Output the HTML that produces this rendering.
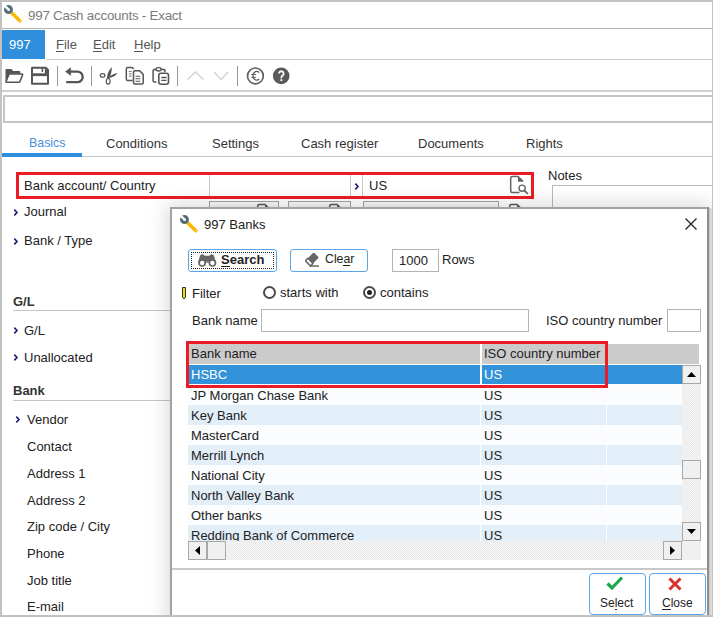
<!DOCTYPE html>
<html><head><meta charset="utf-8">
<style>
*{box-sizing:border-box;margin:0;padding:0}
html,body{width:713px;height:617px;overflow:hidden;background:#fff}
body{position:relative;font-family:"Liberation Sans",sans-serif;font-size:13px;color:#222}
.a{position:absolute}
.t{position:absolute;font-size:13px;line-height:15px;white-space:nowrap}
.hl{position:absolute;height:1px;background:#c8c8c8}
.vl{position:absolute;width:1px;background:#c8c8c8}
.chev{position:absolute;width:4px;height:7px}
u{text-decoration:none;border-bottom:1px solid currentColor;display:inline-block;line-height:12px}
</style></head><body>


<!-- title bar -->
<svg class="a" style="left:0px;top:0px" width="26" height="26" viewBox="0 0 26 26">
  <path d="M11.8 13 L19.8 20.8" stroke="#f9b800" stroke-width="3.6" stroke-linecap="round"/>
  <circle cx="19.6" cy="20.6" r="0.7" fill="#ffe9a8"/>
  <circle cx="8.5" cy="9.6" r="4.5" fill="#546e7a"/><path d="M9.6 8.9 L5.9 5.2 L4.2 6.9 L7.9 10.6 Z" fill="#fff"/><circle cx="8.75" cy="9.75" r="1.25" fill="#fff"/>
</svg>
<div class="t" style="left:28px;top:8px;color:#7b7b7b;font-size:13.4px;letter-spacing:-0.25px">997 Cash accounts - Exact</div>
<div class="hl" style="left:2px;top:28px;width:710px;height:1px;background:#b4b4b4"></div>

<!-- menu bar -->
<div class="a" style="left:2px;top:30px;width:43px;height:29px;background:#2f8fdc"></div>
<div class="t" style="left:9px;top:37px;color:#fff">997</div>
<div class="t" style="left:56px;top:37px;color:#555"><u>F</u>ile</div>
<div class="t" style="left:93px;top:37px;color:#555"><u>E</u>dit</div>
<div class="t" style="left:134px;top:37px;color:#555"><u>H</u>elp</div>
<div class="hl" style="left:47px;top:59px;width:665px;background:#c8c8c8"></div>

<!-- toolbar -->
<svg class="a" style="left:0;top:60px" width="300" height="30" viewBox="0 60 300 30">
  <!-- folder -->
  <path d="M5.5 70 q0 -1 1 -1 h5 l1.5 2 h6.5 q0.8 0 0.8 0.8 v2 h-10 l-2.8 8.2 h-1 q-1 0 -1 -1 z" fill="#555"/>
  <path d="M9.8 74 h12.2 q0.9 0 0.6 0.9 l-2.6 6.5 q-0.3 0.8 -1.2 0.8 h-12 q-0.9 0 -0.6 -0.9 l2.6 -6.5 q0.3 -0.8 1 -0.8 z" fill="#fff" stroke="#555" stroke-width="1.5" stroke-linejoin="round"/>
  <!-- save -->
  <path d="M32 67.8 h13.8 l2.2 2.2 v13.7 h-16 z" fill="none" stroke="#555" stroke-width="2" stroke-linejoin="round"/>
  <rect x="32" y="73.3" width="16" height="2.8" fill="#555"/>
  <rect x="41.6" y="68" width="1.5" height="4" fill="#555"/>
  <path d="M44.8 68 l3.2 3.2 v2.5 h-3.2 z" fill="#555"/>
  <!-- sep -->
  <rect x="57" y="66" width="1" height="20" fill="#9a9a9a"/>
  <!-- undo -->
  <path d="M69 71.6 h8.4 a5.3 5.3 0 0 1 0 10.6 h-11.2" fill="none" stroke="#555" stroke-width="2.3"/>
  <path d="M65.6 71.6 l5 -3.8 v7.6 z" fill="#555" stroke="#555" stroke-width="0.6" stroke-linejoin="round"/>
  <rect x="91" y="66" width="1" height="20" fill="#9a9a9a"/>
  <!-- scissors -->
  <ellipse cx="102.6" cy="75.4" rx="2.3" ry="1.8" fill="none" stroke="#555" stroke-width="1.2"/>
  <ellipse cx="108.2" cy="81.2" rx="1.9" ry="2.9" fill="none" stroke="#555" stroke-width="1.2"/>
  <path d="M107 78.8 q0 -6.5 4.7 -11.8 q0.3 6.5 -2.8 12 z" fill="#555"/>
  <path d="M109.6 76.8 q3.5 -3.5 8.2 -3.5 q-3 3.5 -7.8 4.8 z" fill="#555"/>
  <!-- copy -->
  <path d="M133.5 69 q-0.5 -1.6 -2 -1.6 h-3.6 q-1.6 0 -1.6 1.6 v10 q0 1.6 1.6 1.6 h4.6" fill="none" stroke="#555" stroke-width="1.5"/>
  <path d="M128.8 71.5 h2.8 M128.8 73.8 h2.8 M128.8 76 h2.8" stroke="#777" stroke-width="1"/>
  <path d="M134.8 70.8 h4.8 l3.6 3.6 v8.3 q0 1.3 -1.3 1.3 h-7.1 q-1.3 0 -1.3 -1.3 v-10.6 q0 -1.3 1.3 -1.3 z" fill="#fff" stroke="#555" stroke-width="1.5"/>
  <path d="M135.5 76.3 h4.8 M135.5 78.8 h4.8 M135.5 81.2 h4.8" stroke="#555" stroke-width="1.1"/>
  <!-- paste -->
  <path d="M156.5 82 h-2.2 q-1.2 0 -1.2 -1.2 v-10 q0 -1.2 1.2 -1.2 h10 q0.6 0 0.6 0.6 v1.8" fill="none" stroke="#555" stroke-width="1.5"/>
  <ellipse cx="158.6" cy="69.3" rx="2.6" ry="1.7" fill="#fff" stroke="#555" stroke-width="1.4"/>
  <rect x="158.8" y="73.3" width="9.7" height="11" rx="2.2" fill="#fff" stroke="#555" stroke-width="1.6"/>
  <path d="M161.3 77.5 h5.2 M161.3 80.3 h5.2" stroke="#555" stroke-width="1.3"/>
  <rect x="177" y="66" width="1" height="20" fill="#9a9a9a"/>
  <!-- up/down -->
  <path d="M187.5 79.5 l8 -7.5 l8 7.5" fill="none" stroke="#d2d2d2" stroke-width="1.4"/>
  <path d="M214 72 l7 7.5 l7 -7.5" fill="none" stroke="#d2d2d2" stroke-width="1.4"/>
  <rect x="237" y="66" width="1" height="20" fill="#9a9a9a"/>
  <!-- euro -->
  <circle cx="255.4" cy="75.9" r="7.9" fill="none" stroke="#606060" stroke-width="1.7"/>
  <path d="M259.2 72.6 C257.6 70.6 253.2 70.9 252.9 75.8 C253.2 80.7 257.6 81 259.2 79" fill="none" stroke="#606060" stroke-width="1.3"/>
  <path d="M251.3 74.5 h4.8 M251.3 77.3 h4.8" stroke="#606060" stroke-width="1"/>
  <!-- help -->
  <circle cx="281.2" cy="75.9" r="8.3" fill="#5a5a5a"/>
  <path d="M279 73.6 a2.3 2.3 0 1 1 3.6 1.9 q-1.2 0.8 -1.2 2 v0.8" fill="none" stroke="#fff" stroke-width="1.8"/>
  <rect x="280.4" y="79.2" width="1.9" height="1.8" fill="#fff"/>
</svg>
<div class="hl" style="left:2px;top:90px;width:710px;height:2px;background:#cfcfcf"></div>

<!-- input -->
<div class="a" style="left:3px;top:95px;width:712px;height:28px;border:2px solid #c4c4c4;border-right:none"></div>

<!-- tabs -->
<div class="t" style="left:29px;top:136px;color:#4a8fd8;font-size:12.4px">Basics</div>
<div class="t" style="left:106px;top:136px;color:#333">Conditions</div>
<div class="t" style="left:212px;top:136px;color:#333">Settings</div>
<div class="t" style="left:301px;top:136px;color:#333">Cash register</div>
<div class="t" style="left:418px;top:136px;color:#333">Documents</div>
<div class="t" style="left:526px;top:136px;color:#333">Rights</div>
<div class="hl" style="left:2px;top:156px;width:710px;height:1px;background:#c4c4c4"></div>
<div class="a" style="left:2px;top:153px;width:80px;height:4px;background:#2f8fdc"></div>


<!-- form -->
<div class="t" style="left:24px;top:178px;color:#222">Bank account/ Country</div>
<div class="vl" style="left:209px;top:174px;height:23px;background:#c8c8c8"></div>
<div class="vl" style="left:350px;top:174px;height:23px;background:#c8c8c8"></div>
<div class="vl" style="left:362px;top:174px;height:23px;background:#c8c8c8"></div>
<svg class="a" style="left:354px;top:182px" width="6" height="9" viewBox="0 0 6 9"><path d="M1.3 1.6 L4 4.5 L1.3 7.4" fill="none" stroke="#1a1f6e" stroke-width="1.6"/></svg>
<div class="t" style="left:369px;top:178px;color:#222">US</div>
<svg class="a" style="left:508px;top:174px" width="24" height="22" viewBox="508 174 24 22">
  <path d="M519.5 192.6 h-7.3 q-1.5 0 -1.5 -1.5 v-13.2 q0 -1.5 1.5 -1.5 h5.8 l5 5" fill="none" stroke="#666" stroke-width="1.5"/>
  <path d="M518 176.6 v5.2 h5.2 z" fill="#666"/>
  <circle cx="522.1" cy="188.2" r="3.1" fill="none" stroke="#666" stroke-width="1.4"/>
  <path d="M524.3 190.4 l3 3" stroke="#666" stroke-width="1.7" stroke-linecap="round"/>
</svg>
<div class="a" style="left:16px;top:172px;width:518px;height:27px;border:3px solid #ec1c26"></div>

<div class="t" style="left:548px;top:168px;color:#222">Notes</div>
<div class="a" style="left:552px;top:185px;width:170px;height:60px;border:1px solid #b9b9b9"></div>

<!-- hidden controls row -->
<div class="a" style="left:209px;top:201px;width:70px;height:12px;border:1px solid #a4a4a4;background:linear-gradient(#fbfbfb,#ececec)"></div>
<div class="a" style="left:288px;top:201px;width:63px;height:12px;border:1px solid #a4a4a4;background:linear-gradient(#fbfbfb,#ececec)"></div>
<div class="a" style="left:363px;top:201px;width:136px;height:12px;border:1px solid #a4a4a4;background:linear-gradient(#fbfbfb,#ececec)"></div>
<svg class="a" style="left:255px;top:202px" width="24" height="22" viewBox="508 174 24 22">
  <path d="M519.5 192.6 h-7.3 q-1.5 0 -1.5 -1.5 v-13.2 q0 -1.5 1.5 -1.5 h5.8 l5 5" fill="none" stroke="#5a5a5a" stroke-width="1.5"/>
  <path d="M518 176.6 v5.2 h5.2 z" fill="#5a5a5a"/>
</svg>
<svg class="a" style="left:327px;top:202px" width="24" height="22" viewBox="508 174 24 22">
  <path d="M519.5 192.6 h-7.3 q-1.5 0 -1.5 -1.5 v-13.2 q0 -1.5 1.5 -1.5 h5.8 l5 5" fill="none" stroke="#5a5a5a" stroke-width="1.5"/>
  <path d="M518 176.6 v5.2 h5.2 z" fill="#5a5a5a"/>
</svg>
<svg class="a" style="left:507px;top:202px" width="24" height="22" viewBox="508 174 24 22">
  <path d="M519.5 192.6 h-7.3 q-1.5 0 -1.5 -1.5 v-13.2 q0 -1.5 1.5 -1.5 h5.8 l5 5" fill="none" stroke="#5a5a5a" stroke-width="1.5"/>
  <path d="M518 176.6 v5.2 h5.2 z" fill="#5a5a5a"/>
</svg>
<svg class="a" style="left:13px;top:208px" width="6" height="9" viewBox="0 0 6 9"><path d="M1.3 1.6 L4 4.5 L1.3 7.4" fill="none" stroke="#1a1f6e" stroke-width="1.6"/></svg><div class="t" style="left:24px;top:204px">Journal</div>
<svg class="a" style="left:13px;top:237px" width="6" height="9" viewBox="0 0 6 9"><path d="M1.3 1.6 L4 4.5 L1.3 7.4" fill="none" stroke="#1a1f6e" stroke-width="1.6"/></svg><div class="t" style="left:24px;top:233px">Bank / Type</div>

<div class="t" style="left:13px;top:294px;font-weight:bold;color:#333">G/L</div>
<div class="hl" style="left:13px;top:310px;width:160px;height:1px;background:#c4c4c4"></div>
<svg class="a" style="left:13px;top:326px" width="6" height="9" viewBox="0 0 6 9"><path d="M1.3 1.6 L4 4.5 L1.3 7.4" fill="none" stroke="#1a1f6e" stroke-width="1.6"/></svg><div class="t" style="left:24px;top:323px">G/L</div>
<svg class="a" style="left:13px;top:353px" width="6" height="9" viewBox="0 0 6 9"><path d="M1.3 1.6 L4 4.5 L1.3 7.4" fill="none" stroke="#1a1f6e" stroke-width="1.6"/></svg><div class="t" style="left:24px;top:350px">Unallocated</div>

<div class="t" style="left:13px;top:383px;font-weight:bold;color:#333">Bank</div>
<div class="hl" style="left:13px;top:400px;width:160px;height:1px;background:#c4c4c4"></div>
<svg class="a" style="left:15px;top:415px" width="6" height="9" viewBox="0 0 6 9"><path d="M1.3 1.6 L4 4.5 L1.3 7.4" fill="none" stroke="#1a1f6e" stroke-width="1.6"/></svg><div class="t" style="left:27px;top:412px">Vendor</div>
<div class="t" style="left:27px;top:439px">Contact</div>
<div class="t" style="left:27px;top:466px">Address 1</div>
<div class="t" style="left:27px;top:493px">Address 2</div>
<div class="t" style="left:27px;top:519px">Zip code / City</div>
<div class="t" style="left:27px;top:546px">Phone</div>
<div class="t" style="left:27px;top:573px">Job title</div>
<div class="t" style="left:27px;top:599px">E-mail</div>


<!-- dialog -->
<div class="a" style="left:170px;top:207px;width:539px;height:420px;background:#fff;border:2px solid #a2a2a2;box-shadow:0 0 18px 3px rgba(0,0,0,0.15)"></div>
<svg class="a" style="left:176px;top:210px" width="26" height="26" viewBox="0 0 26 26">
  <path d="M11.8 13 L19.8 20.8" stroke="#f9b800" stroke-width="3.6" stroke-linecap="round"/>
  <circle cx="19.6" cy="20.6" r="0.7" fill="#ffe9a8"/>
  <circle cx="8.5" cy="9.6" r="4.5" fill="#546e7a"/><path d="M9.6 8.9 L5.9 5.2 L4.2 6.9 L7.9 10.6 Z" fill="#fff"/><circle cx="8.75" cy="9.75" r="1.25" fill="#fff"/>
</svg>
<div class="t" style="left:204px;top:217px;color:#222">997 Banks</div>
<svg class="a" style="left:684px;top:217px" width="14" height="14" viewBox="0 0 14 14"><path d="M1.5 1.5 L12.5 12.5 M12.5 1.5 L1.5 12.5" stroke="#222" stroke-width="1.3"/></svg>

<!-- search button -->
<div class="a" style="left:188px;top:249px;width:89px;height:23px;border:1px solid #5aa6e6;border-radius:3px;background:#fff"></div>
<div class="a" style="left:191px;top:252px;width:83px;height:17px;border:1px dotted #222"></div>
<svg class="a" style="left:194px;top:250px" width="26" height="20" viewBox="194 250 26 20">
  <path d="M199.6 257 q0.6 -2.6 2.4 -2.8 q1.8 -0.2 2.6 1.6 h4.8 q0.8 -1.8 2.6 -1.6 q1.8 0.2 2.4 2.8 l1.6 5.5 h-18 z" fill="#666"/>
  <circle cx="202.2" cy="262.8" r="3.9" fill="#666"/><circle cx="212.4" cy="262.8" r="3.9" fill="#666"/>
  <circle cx="202.2" cy="263" r="2.2" fill="#fff"/><circle cx="212.4" cy="263" r="2.2" fill="#fff"/>
  <rect x="206" y="261.3" width="2.6" height="1.6" fill="#999"/>
</svg>
<div class="t" style="left:221px;top:252px;font-weight:bold;color:#222"><u>S</u>earch</div>

<!-- clear button -->
<div class="a" style="left:290px;top:249px;width:78px;height:23px;border:1px solid #5aa6e6;border-radius:3px;background:#fff"></div>
<svg class="a" style="left:296px;top:250px" width="26" height="20" viewBox="296 250 26 20">
  <path d="M313 253 q0.7 -0.7 1.4 0 l3.8 3.8 q0.7 0.7 0 1.4 l-5.2 5.2 l-5.2 -5.2 z" fill="#666"/>
  <path d="M307.8 258.2 l5.2 5.2 l-1.8 1.8 q-0.7 0.7 -1.4 0 l-3.8 -3.8 q-0.7 -0.7 0 -1.4 z" fill="#fff" stroke="#666" stroke-width="1.5" stroke-linejoin="round"/>
  <rect x="309.5" y="265.3" width="9.4" height="1.5" fill="#666"/>
</svg>
<div class="t" style="left:325px;top:252px;color:#222;font-size:12.3px">Cle<u>a</u>r</div>

<!-- rows -->
<div class="a" style="left:392px;top:249px;width:47px;height:23px;border:1px solid #b4b4b4"></div>
<div class="t" style="left:399px;top:253px;color:#222">1000</div>
<div class="t" style="left:442px;top:252px;color:#222">Rows</div>

<!-- filter -->
<svg class="a" style="left:180px;top:286px" width="8" height="14" viewBox="0 0 8 14"><path d="M2.5 1.5 h3 v9.5 l-1.5 2 -1.5 -2 z" fill="#f2e000" stroke="#333" stroke-width="1"/></svg>
<div class="t" style="left:192px;top:286px;color:#222">Filter</div>
<div class="a" style="left:263px;top:286px;width:13px;height:13px;border:2px solid #4a4a4a;border-radius:50%"></div>
<div class="t" style="left:280px;top:285px;color:#222">starts with</div>
<div class="a" style="left:363px;top:286px;width:13px;height:13px;border:2px solid #4a4a4a;border-radius:50%"></div>
<div class="a" style="left:367px;top:290px;width:5px;height:5px;background:#222;border-radius:50%"></div>
<div class="t" style="left:380px;top:285px;color:#222">contains</div>

<div class="t" style="left:192px;top:313px;color:#222">Bank name</div>
<div class="a" style="left:261px;top:309px;width:268px;height:23px;border:1px solid #b4b4b4"></div>
<div class="t" style="left:546px;top:313px;color:#222">ISO country number</div>
<div class="a" style="left:667px;top:309px;width:34px;height:23px;border:1px solid #b4b4b4"></div>

<!-- grid -->
<div class="a" style="left:188px;top:344px;width:511px;height:20px;background:#cbcbcb"></div>
<div class="a" style="left:480px;top:344px;width:2px;height:20px;background:#fff"></div>
<div class="t" style="left:191px;top:346px;color:#222">Bank name</div>
<div class="t" style="left:484px;top:346px;color:#222">ISO country number</div>
<div class="a" style="left:188px;top:365px;width:494px;height:19px;background:#3293da"></div>
<div class="a" style="left:480px;top:365px;width:2px;height:19px;background:#fff"></div>
<div class="t" style="left:191px;top:367px;color:#fff">HSBC</div>
<div class="t" style="left:484px;top:367px;color:#fff">US</div>
<div class="a" style="left:188px;top:385px;width:494px;height:20px;background:#fafcfe"></div>
<div class="a" style="left:480px;top:385px;width:1px;height:20px;background:#fff"></div>
<div class="a" style="left:606px;top:385px;width:1px;height:20px;background:#fff"></div>
<div class="t" style="left:191px;top:388px;color:#222;height:153px;overflow:hidden">JP Morgan Chase Bank</div>
<div class="t" style="left:484px;top:388px;color:#222;height:153px;overflow:hidden">US</div>
<div class="a" style="left:188px;top:405px;width:494px;height:20px;background:#e2eef8"></div>
<div class="a" style="left:480px;top:405px;width:1px;height:20px;background:#fff"></div>
<div class="a" style="left:606px;top:405px;width:1px;height:20px;background:#fff"></div>
<div class="t" style="left:191px;top:408px;color:#222;height:133px;overflow:hidden">Key Bank</div>
<div class="t" style="left:484px;top:408px;color:#222;height:133px;overflow:hidden">US</div>
<div class="a" style="left:188px;top:425px;width:494px;height:20px;background:#fafcfe"></div>
<div class="a" style="left:480px;top:425px;width:1px;height:20px;background:#fff"></div>
<div class="a" style="left:606px;top:425px;width:1px;height:20px;background:#fff"></div>
<div class="t" style="left:191px;top:428px;color:#222;height:113px;overflow:hidden">MasterCard</div>
<div class="t" style="left:484px;top:428px;color:#222;height:113px;overflow:hidden">US</div>
<div class="a" style="left:188px;top:445px;width:494px;height:20px;background:#e2eef8"></div>
<div class="a" style="left:480px;top:445px;width:1px;height:20px;background:#fff"></div>
<div class="a" style="left:606px;top:445px;width:1px;height:20px;background:#fff"></div>
<div class="t" style="left:191px;top:448px;color:#222;height:93px;overflow:hidden">Merrill Lynch</div>
<div class="t" style="left:484px;top:448px;color:#222;height:93px;overflow:hidden">US</div>
<div class="a" style="left:188px;top:465px;width:494px;height:20px;background:#fafcfe"></div>
<div class="a" style="left:480px;top:465px;width:1px;height:20px;background:#fff"></div>
<div class="a" style="left:606px;top:465px;width:1px;height:20px;background:#fff"></div>
<div class="t" style="left:191px;top:468px;color:#222;height:73px;overflow:hidden">National City</div>
<div class="t" style="left:484px;top:468px;color:#222;height:73px;overflow:hidden">US</div>
<div class="a" style="left:188px;top:485px;width:494px;height:20px;background:#e2eef8"></div>
<div class="a" style="left:480px;top:485px;width:1px;height:20px;background:#fff"></div>
<div class="a" style="left:606px;top:485px;width:1px;height:20px;background:#fff"></div>
<div class="t" style="left:191px;top:488px;color:#222;height:53px;overflow:hidden">North Valley Bank</div>
<div class="t" style="left:484px;top:488px;color:#222;height:53px;overflow:hidden">US</div>
<div class="a" style="left:188px;top:505px;width:494px;height:20px;background:#fafcfe"></div>
<div class="a" style="left:480px;top:505px;width:1px;height:20px;background:#fff"></div>
<div class="a" style="left:606px;top:505px;width:1px;height:20px;background:#fff"></div>
<div class="t" style="left:191px;top:508px;color:#222;height:33px;overflow:hidden">Other banks</div>
<div class="t" style="left:484px;top:508px;color:#222;height:33px;overflow:hidden">US</div>
<div class="a" style="left:188px;top:525px;width:494px;height:16px;background:#e2eef8"></div>
<div class="a" style="left:480px;top:525px;width:1px;height:16px;background:#fff"></div>
<div class="a" style="left:606px;top:525px;width:1px;height:16px;background:#fff"></div>
<div class="t" style="left:191px;top:528px;color:#222;height:13px;overflow:hidden">Redding Bank of Commerce</div>
<div class="t" style="left:484px;top:528px;color:#222;height:13px;overflow:hidden">US</div>

<!-- vertical scrollbar -->
<div class="a" style="left:682px;top:384px;width:19px;height:157px;background:repeating-conic-gradient(#e8e8e8 0 25%,#f7f7f7 0 50%) 0 0/2px 2px"></div>
<div class="a" style="left:682px;top:365px;width:19px;height:19px;background:#f0f0f0;border:1px solid #a8a8a8"></div>
<svg class="a" style="left:682px;top:365px" width="19" height="19"><path d="M5 12 L9.5 7 L14 12 z" fill="#000"/></svg>
<div class="a" style="left:682px;top:460px;width:19px;height:19px;background:#f0f0f0;border:1px solid #a8a8a8"></div>
<div class="a" style="left:682px;top:522px;width:19px;height:19px;background:#f0f0f0;border:1px solid #a8a8a8"></div>
<svg class="a" style="left:682px;top:522px" width="19" height="19"><path d="M5 7 L9.5 12 L14 7 z" fill="#000"/></svg>
<!-- horizontal scrollbar -->
<div class="a" style="left:188px;top:541px;width:494px;height:19px;background:repeating-conic-gradient(#e8e8e8 0 25%,#f7f7f7 0 50%) 0 0/2px 2px"></div>
<div class="a" style="left:188px;top:541px;width:19px;height:19px;background:#f0f0f0;border:1px solid #a8a8a8"></div>
<svg class="a" style="left:188px;top:541px" width="19" height="19"><path d="M12 5 L7 9.5 L12 14 z" fill="#000"/></svg>
<div class="a" style="left:207px;top:541px;width:19px;height:19px;background:#f0f0f0;border:1px solid #a8a8a8"></div>
<div class="a" style="left:663px;top:541px;width:19px;height:19px;background:#f0f0f0;border:1px solid #a8a8a8"></div>
<svg class="a" style="left:663px;top:541px" width="19" height="19"><path d="M7 5 L12 9.5 L7 14 z" fill="#000"/></svg>
<div class="a" style="left:682px;top:541px;width:19px;height:19px;background:#f0f0f0"></div>

<!-- red highlight -->
<div class="a" style="left:186px;top:341px;width:422px;height:47px;border:3px solid #ec1c26"></div>

<!-- bottom -->
<div class="a" style="left:172px;top:568px;width:535px;height:2px;background:#c8c8c8"></div>
<div class="a" style="left:589px;top:573px;width:57px;height:42px;border:1px solid #5aa6e6;border-radius:4px;background:#fff"></div>
<svg class="a" style="left:605px;top:575px" width="20" height="16" viewBox="0 0 20 16"><path d="M2.5 8.5 L7 13 L17 2.5" fill="none" stroke="#1ea64a" stroke-width="3.2"/></svg>
<div class="t" style="left:600px;top:596px;color:#222;font-size:12px">Se<u>l</u>ect</div>
<div class="a" style="left:649px;top:573px;width:57px;height:42px;border:1px solid #5aa6e6;border-radius:4px;background:#fff"></div>
<svg class="a" style="left:667px;top:576px" width="16" height="16" viewBox="0 0 16 16"><path d="M2.5 2.5 L13.5 13.5 M13.5 2.5 L2.5 13.5" fill="none" stroke="#d6322a" stroke-width="3"/></svg>
<div class="t" style="left:662px;top:596px;color:#222;font-size:12px"><u>C</u>lose</div>

<div class="a" style="left:707px;top:207px;width:2px;height:410px;background:#8e8e8e"></div>
<div class="a" style="left:709px;top:208px;width:4px;height:409px;background:linear-gradient(to right,#c6c6c6,#dedede 60%,#d0d0d0)"></div>
<!-- window frame -->
<div class="a" style="left:0;top:0;width:713px;height:2px;background:#c2c2c2"></div>
<div class="a" style="left:0;top:0;width:2px;height:617px;background:#c2c2c2"></div>
<div class="a" style="left:712px;top:0;width:1px;height:617px;background:#c2c2c2"></div>
<div class="a" style="left:0;top:615px;width:713px;height:2px;background:#c2c2c2"></div>
</body></html>
